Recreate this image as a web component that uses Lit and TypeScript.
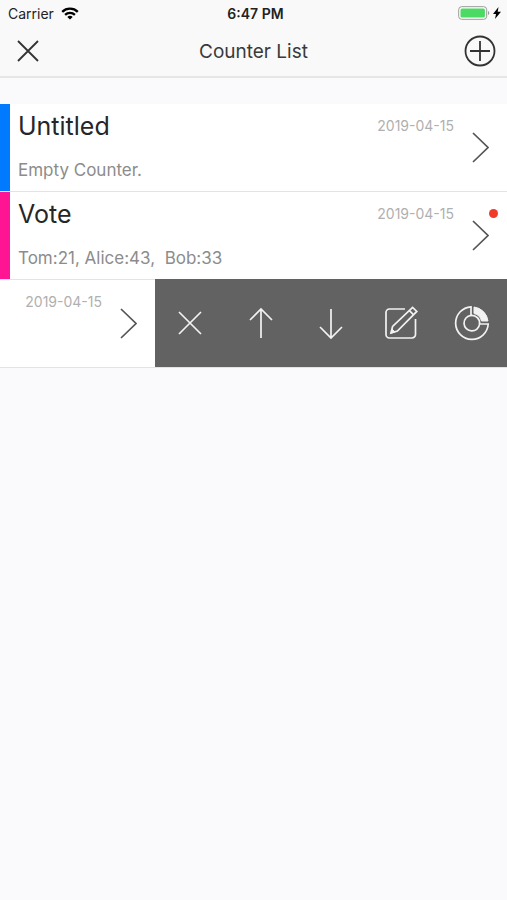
import { LitElement, html, css, svg, nothing } from "lit";
import { customElement, property } from "lit/decorators.js";
import { classMap } from "lit/directives/class-map.js";

interface Counter {
  title: string;
  detail: string;
  date: string;
  tone: string;
  unread: boolean;
  swiped: boolean;
}

const counters: Counter[] = [
  { title: "Untitled", detail: "Empty Counter.", date: "2019-04-15", tone: "blue", unread: false, swiped: false },
  { title: "Vote", detail: "Tom:21, Alice:43,  Bob:33", date: "2019-04-15", tone: "pink", unread: true, swiped: false },
  { title: "", detail: "", date: "2019-04-15", tone: "", unread: false, swiped: true },
];

const actions = [
  { label: "Delete", icon: svg`<path d="M7 7l22 22M29 7L7 29" />` },
  { label: "Move up", icon: svg`<path d="M18 33V4M7 15L18 4l11 11" />` },
  { label: "Move down", icon: svg`<path d="M18 4v29M7 22l11 11 11-11" />` },
  {
    label: "Edit",
    icon: svg`<path d="M22 4H6.500a3.500 3.500 0 0 0-3.500 3.500v22a3.500 3.500 0 0 0 3.500 3.500h22.500a3.500 3.500 0 0 0 3.500-3.500V14" />
      <path d="M8 28l1.600-6.600L29.600 2.400l4.200 4L14.400 26z" />
      <path d="M26.400 5.600l4 4" />
      <path class="solid" d="M8 28l1-4 3 3z" />`,
  },
  {
    label: "Chart",
    icon: svg`<path d="M17 1.800A16.300 16.300 0 1 0 34.200 19H25.600A7.800 7.800 0 1 1 17 10.400z" />
      <path d="M17 10.400A7.800 7.800 0 0 1 25.600 19" />
      <path class="solid" d="M20 2a16 16 0 0 1 14 14h-6.500a10 10 0 0 0-7.500-7.500z" />`,
  },
];

@customElement("status-bar")
class StatusBar extends LitElement {
  static styles = css`
    :host {
      display: grid;
      grid-template-columns: 1fr auto 1fr;
      align-items: center;
      height: 26px;
      padding: 0 4px 0 8px;
      font-size: 14px;
      color: #222;
    }
    .side { display: flex; align-items: center; gap: 7px; }
    .end { justify-content: flex-end; gap: 3px; padding-right: 2px; }
    .time { font-weight: 600; }
    svg { display: block; }
  `;
  render() {
    return html`
      <div class="side">
        <span>Carrier</span>
        <svg width="18" height="13" viewBox="0 0 18 13" fill="none" stroke="#000" stroke-width="2.300" aria-label="Wi-Fi">
          <path d="M1.200 4.800a11.200 11.200 0 0 1 15.600 0M4.100 7.900a7 7 0 0 1 9.800 0" />
          <path d="M9 12.500L6.300 9.900a4 4 0 0 1 5.400 0z" fill="#000" stroke="none" />
        </svg>
      </div>
      <span class="time">6:47 PM</span>
      <div class="side end">
        <svg width="32" height="14" viewBox="0 0 32 14" aria-label="Battery">
          <rect x=".7" y=".7" width="28" height="12.600" rx="3" fill="#fff" stroke="#999" />
          <rect x="2.500" y="2.500" width="24.400" height="9" rx="1.500" fill="#4cd964" />
          <path d="M30 5a2.200 2.200 0 0 1 0 4z" fill="#999" />
        </svg>
        <svg width="8" height="12" viewBox="0 0 8 12" aria-label="Charging">
          <path d="M5.500 0L0 7h3L2 12l6-7.300H4.700z" fill="#000" />
        </svg>
      </div>
    `;
  }
}

@customElement("counter-row")
class CounterRow extends LitElement {
  @property({ attribute: false }) counter!: Counter;

  static styles = css`
    :host {
      display: flex;
      height: 87px;
      background: #fff;
      border-bottom: 1px solid #e3e3e5;
    }
    .stripe { flex: none; width: 10px; }
    .blue { background: #007aff; }
    .pink { background: #ff1493; }
    .entry {
      flex: 1;
      position: relative;
      display: flex;
      min-width: 0;
      padding: 0 18px 0 8px;
    }
    .text { flex: 1; min-width: 0; }
    h2 {
      margin: 6px 0 0;
      font-size: 25px;
      font-weight: 400;
      line-height: 32px;
      color: #262626;
    }
    p {
      margin: 17px 0 0;
      font-size: 17px;
      line-height: 22px;
      color: #8c8c8c;
      white-space: pre;
    }
    time {
      margin: 12px 18px 0 0;
      font-size: 14px;
      line-height: 20px;
      white-space: nowrap;
      color: #b0b0b0;
    }
    .chevron { align-self: center; flex: none; }
    .dot {
      position: absolute;
      top: 17px;
      right: 9px;
      width: 9px;
      height: 9px;
      border-radius: 50%;
      background: #f03a2a;
    }
    .actions {
      display: grid;
      grid-template-columns: repeat(5, 1fr);
      flex: none;
      width: 352px;
      margin-top: -1px;
      background: #626262;
    }
    button {
      display: grid;
      place-items: center;
      padding: 0;
      border: 0;
      background: none;
      cursor: pointer;
    }
    svg {
      display: block;
      fill: none;
      stroke: #f2f2f2;
      stroke-width: 1.700;
    }
    .chevron { stroke: #555; }
    .solid { fill: #f2f2f2; stroke-width: 1; }
  `;

  render() {
    const c = this.counter;
    return html`
      ${c.tone ? html`<div class=${classMap({ stripe: true, [c.tone]: true })}></div>` : nothing}
      <div class="entry">
        <div class="text">
          ${c.title ? html`<h2>${c.title}</h2><p>${c.detail}</p>` : nothing}
        </div>
        <time datetime=${c.date}>${c.date}</time>
        <svg class="chevron" width="17" height="31" viewBox="0 0 17 31">
          <path d="M1 1l15 14.500L1 30" />
        </svg>
        ${c.unread ? html`<span class="dot"></span>` : nothing}
      </div>
      ${c.swiped
        ? html`<div class="actions">
            ${actions.map(
              (a) => html`<button aria-label=${a.label}>
                <svg width="36" height="36" viewBox="0 0 36 36">${a.icon}</svg>
              </button>`
            )}
          </div>`
        : nothing}
    `;
  }
}

@customElement("app-root")
class AppRoot extends LitElement {
  static styles = css`
    :host {
      display: block;
      min-height: 100vh;
      background: #fafafc;
      font-family: Inter, "Liberation Sans", sans-serif;
    }
    header {
      background: #f9f9f9;
      border-bottom: 2px solid #e6e6e7;
    }
    nav {
      display: grid;
      grid-template-columns: 1fr auto 1fr;
      align-items: center;
      height: 50px;
      padding: 0 11px;
    }
    h1 {
      margin: 0;
      font-size: 19px;
      font-weight: 400;
      color: #3a3a3a;
    }
    button {
      padding: 0;
      border: 0;
      background: none;
      justify-self: start;
      cursor: pointer;
    }
    .close { padding-left: 6px; }
    .add { justify-self: end; }
    svg {
      display: block;
      fill: none;
      stroke: #333;
      stroke-width: 1.800;
    }
    main { padding-top: 26px; }
  `;
  render() {
    return html`
      <header>
        <status-bar></status-bar>
        <nav>
          <button class="close" aria-label="Close">
            <svg width="22" height="22" viewBox="0 0 22 22"><path d="M1 1l20 20M21 1L1 21" /></svg>
          </button>
          <h1>Counter List</h1>
          <button class="add" aria-label="Add counter">
            <svg width="32" height="32" viewBox="0 0 32 32">
              <circle cx="16" cy="16" r="14.500" />
              <path d="M16 6v20M6 16h20" />
            </svg>
          </button>
        </nav>
      </header>
      <main>${counters.map((c) => html`<counter-row .counter=${c}></counter-row>`)}</main>
    `;
  }
}
